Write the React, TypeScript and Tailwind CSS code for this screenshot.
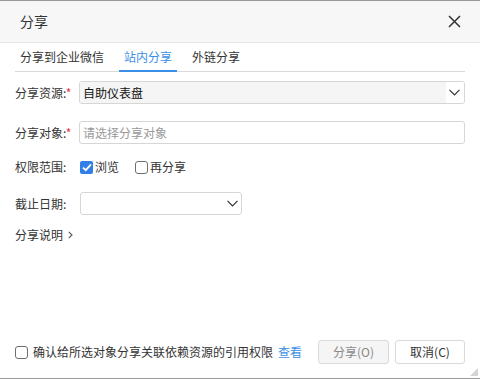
import React from "react";

const font = { fontFamily: '"Noto Sans CJK SC", "Liberation Sans", sans-serif' };

function Chevron({ className = "" }: { className?: string }) {
  return (
    <svg width="11" height="7" viewBox="0 0 11 7" className={className}>
      <path d="M0.5 0.8 L5.5 5.8 L10.5 0.8" fill="none" stroke="#333" strokeWidth="1.2" />
    </svg>
  );
}

function Check({ on }: { on?: boolean }) {
  if (on)
    return (
      <span className="flex h-[13px] w-[13px] items-center justify-center rounded-[2px] bg-[#2f7fe6]">
        <svg width="10" height="9" viewBox="0 0 10 9">
          <path d="M1 4.6 L3.8 7.2 L9 1.4" fill="none" stroke="#fff" strokeWidth="1.8" />
        </svg>
      </span>
    );
  return <span className="h-[13px] w-[13px] rounded-[3px] border border-[#6f6f6f] bg-white" />;
}

const TABS = ["分享到企业微信", "站内分享", "外链分享"];

export default function App() {
  return (
    <div className="flex h-[379px] w-[480px] flex-col border-y border-[#9a9a9a] bg-white text-[12px] text-[#333]" style={font}>
      {/* header */}
      <div className="flex h-[42px] shrink-0 items-center justify-between border-b border-[#e8e8e8] bg-[#f7f7f7] pl-5 pr-[19px]">
        <span className="text-[14px] text-[#333]">分享</span>
        <svg width="13" height="13" viewBox="0 0 13 13">
          <path d="M1 1 L12 12 M12 1 L1 12" stroke="#333" strokeWidth="1.5" />
        </svg>
      </div>

      {/* tabs */}
      <div className="mx-[15px] flex h-[29px] items-end gap-[10px] border-b border-[#d9d9d9]">
        {TABS.map((t, i) => (
          <div key={t} className={`-mb-px flex h-[28px] items-center px-[5px] ${i === 1 ? "border-b-2 border-[#3b8fe6] text-[#3b8fe6]" : "border-b-2 border-transparent text-[#333]"}`}>
            {t}
          </div>
        ))}
      </div>

      {/* form */}
      <div className="flex flex-1 flex-col px-[15px]">
        <div className="mt-[9px] flex h-[23px] items-center">
          <span className="w-[64px] shrink-0">分享资源:<span className="text-[#e33]">*</span></span>
          <div className="flex h-[23px] flex-1 items-center overflow-hidden rounded-[3px] border border-[#d6d6d6]">
            <div className="flex h-full flex-1 items-center bg-[#f5f5f5] pl-[3px] text-[#111]">自助仪表盘</div>
            <div className="flex h-full w-[18px] items-center justify-center bg-white pr-[2px]">
              <Chevron />
            </div>
          </div>
        </div>

        <div className="mt-[17px] flex h-[23px] items-center">
          <span className="w-[64px] shrink-0">分享对象:<span className="text-[#e33]">*</span></span>
          <div className="flex h-[23px] flex-1 items-center rounded-[3px] border border-[#d6d6d6] pl-[3px] text-[#999]">请选择分享对象</div>
        </div>

        <div className="mt-[13px] flex h-[20px] items-center">
          <span className="w-[65px] shrink-0">权限范围:</span>
          <Check on />
          <span className="ml-[2px] mr-[16px]">浏览</span>
          <Check />
          <span className="ml-[2px]">再分享</span>
        </div>

        <div className="mt-[15px] flex h-[23px] items-center">
          <span className="w-[65px] shrink-0">截止日期:</span>
          <div className="flex h-[23px] w-[162px] items-center justify-end rounded-[3px] border border-[#d6d6d6] pr-[3px]">
            <Chevron />
          </div>
        </div>

        <div className="mt-[10px] flex h-[20px] items-center gap-[5px]">
          <span>分享说明</span>
          <svg width="5" height="8" viewBox="0 0 5 8">
            <path d="M0.8 0.8 L4 4 L0.8 7.2" fill="none" stroke="#555" strokeWidth="1.1" />
          </svg>
        </div>
      </div>

      {/* footer */}
      <div className="relative flex h-[40px] shrink-0 items-start px-[15px]">
        <div className="mt-[2px] flex h-[24px] items-center">
          <Check />
          <span className="ml-[5px]">确认给所选对象分享关联依赖资源的引用权限</span>
          <span className="ml-[5px] text-[#3b8fe6]">查看</span>
        </div>
        <div className="ml-auto mt-[2px] flex gap-[6px]">
          <button className="flex h-[24px] w-[71px] items-center justify-center rounded-[3px] border border-[#dadada] bg-[#f5f5f5] text-[#888]">分享(O)</button>
          <button className="flex h-[24px] w-[70px] items-center justify-center rounded-[3px] border border-[#dadada] bg-white text-[#333]">取消(C)</button>
        </div>
        <svg width="8" height="8" viewBox="0 0 8 8" className="absolute bottom-[2px] right-[2px]">
          <path d="M8 0 L8 8 L0 8 Z" fill="#d4d4d4" />
        </svg>
      </div>
    </div>
  );
}
